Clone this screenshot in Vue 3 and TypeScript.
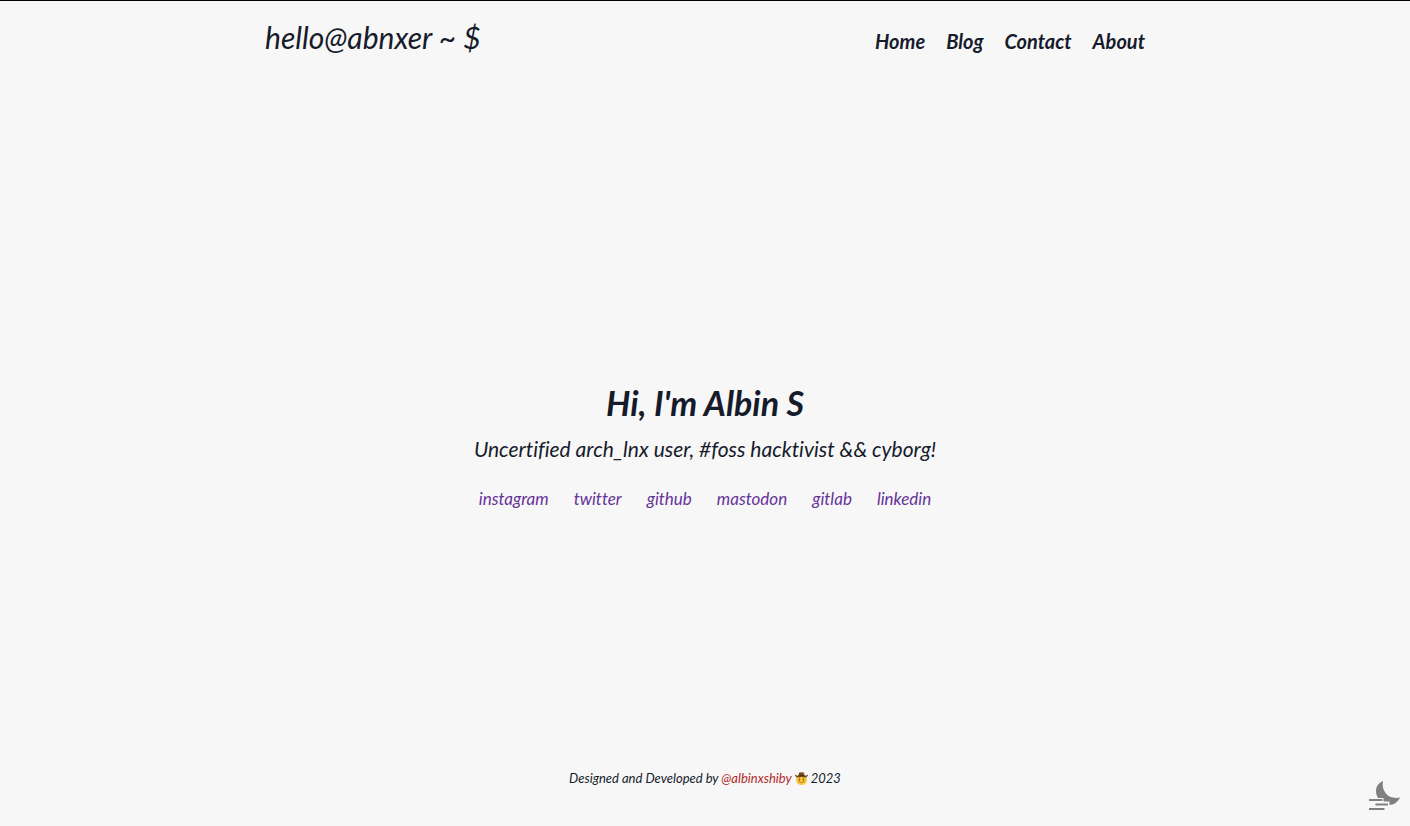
<script setup lang="ts">
interface PageLink {
  label: string
  href: string
}

const pages: PageLink[] = [
  { label: 'Home', href: '#home' },
  { label: 'Blog', href: '#blog' },
  { label: 'Contact', href: '#contact' },
  { label: 'About', href: '#about' },
]

const socials: PageLink[] = [
  { label: 'instagram', href: '#instagram' },
  { label: 'twitter', href: '#twitter' },
  { label: 'github', href: '#github' },
  { label: 'mastodon', href: '#mastodon' },
  { label: 'gitlab', href: '#gitlab' },
  { label: 'linkedin', href: '#linkedin' },
]
</script>

<template>
  <div class="page">
    <header class="header">
      <a class="brand" href="#home">hello@abnxer ~ $</a>
      <nav class="nav" aria-label="Main">
        <a v-for="page in pages" :key="page.label" class="nav-link" :href="page.href">{{ page.label }}</a>
      </nav>
    </header>

    <main class="hero">
      <h1 class="title">Hi, I'm Albin S</h1>
      <p class="tagline">Uncertified arch_lnx user, #foss hacktivist &amp;&amp; cyborg!</p>
      <nav class="socials" aria-label="Social profiles">
        <a v-for="social in socials" :key="social.label" class="social" :href="social.href">{{ social.label }}</a>
      </nav>
    </main>

    <footer class="footer">
      <span>Designed and Developed by <a class="author" href="#author">@albinxshiby</a></span>
      <svg class="cowboy" viewBox="0 0 26 26" aria-hidden="true">
        <circle cx="13" cy="15" r="11" fill="#fcc93c" />
        <ellipse cx="9" cy="15" rx="1.5" ry="2" fill="#704b28" />
        <ellipse cx="17" cy="15" rx="1.5" ry="2" fill="#704b28" />
        <path d="M7 19 Q13 24 19 19" fill="none" stroke="#9a6928" stroke-width="1.5" stroke-linecap="round" />
        <path d="M0 5 Q3 8 7 7 L8 2 Q9 0 13 1 Q17 0 18 2 L19 7 Q23 8 26 5 Q26 10 20 11 Q13 9 6 11 Q0 10 0 5Z" fill="#744b20" />
        <path d="M7 7 Q13 5 19 7 V9 Q13 7 7 9Z" fill="#49301a" />
      </svg>
      <span>2023</span>
    </footer>

    <button class="theme-toggle" type="button" aria-label="Toggle dark mode">
      <svg viewBox="0 0 31 31" aria-hidden="true">
        <path d="M14 0 C7 3 5 10 9 17 H14.5 V20.5 H20.5 V24 C25 24 29 21 31 16.5 C20 19 12 11 14 0Z" fill="#808080" />
        <path d="M0 19 H13.5 M6.5 23.5 H19 M0 28 H15.5" stroke="#808080" stroke-width="2.2" />
      </svg>
    </button>
  </div>
</template>

<style>
body {
  margin: 0;
  background: #f7f7f7;
}
</style>

<style scoped>
.page {
  display: flex;
  flex-direction: column;
  box-sizing: border-box;
  min-height: 100vh;
  border-top: 1px solid #000;
  background: #f7f7f7;
  color: #161b2b;
  font-family: Lato, sans-serif;
  font-style: italic;
  font-variant-ligatures: none;
}

a {
  color: inherit;
  text-decoration: none;
}

.header {
  display: flex;
  align-items: baseline;
  justify-content: space-between;
  box-sizing: border-box;
  width: 100%;
  max-width: 920px;
  margin: 0 auto;
  padding: 14px 20px 18px;
}

.brand {
  font-size: 30px;
  line-height: 44px;
}

.nav {
  display: flex;
  gap: 21px;
}

.nav-link {
  font-size: 20px;
  font-weight: 700;
  line-height: 32px;
}

.hero {
  display: flex;
  flex: 1;
  flex-direction: column;
  align-items: center;
  justify-content: center;
  padding: 44px 20px 0;
  text-align: center;
}

.title {
  margin: 0;
  font-size: 34px;
  font-weight: 700;
  line-height: 52px;
}

.tagline {
  margin: 4px 0 0;
  font-size: 21px;
  line-height: 32px;
}

.socials {
  display: flex;
  flex-wrap: wrap;
  justify-content: center;
  gap: 0 25px;
  margin-top: 20px;
}

.social {
  color: #663399;
  font-size: 17px;
  line-height: 28px;
}

.footer {
  display: flex;
  align-items: center;
  justify-content: center;
  gap: 3px;
  padding: 0 20px 38px;
  font-size: 13px;
  line-height: 20px;
}

.author {
  color: #b22a2a;
}

.cowboy {
  width: 13px;
  height: 13px;
}

.theme-toggle {
  position: fixed;
  right: 10px;
  bottom: 14px;
  padding: 0;
  border: 0;
  background: transparent;
  cursor: pointer;
}

.theme-toggle svg {
  display: block;
  width: 31px;
  height: 31px;
}
</style>
